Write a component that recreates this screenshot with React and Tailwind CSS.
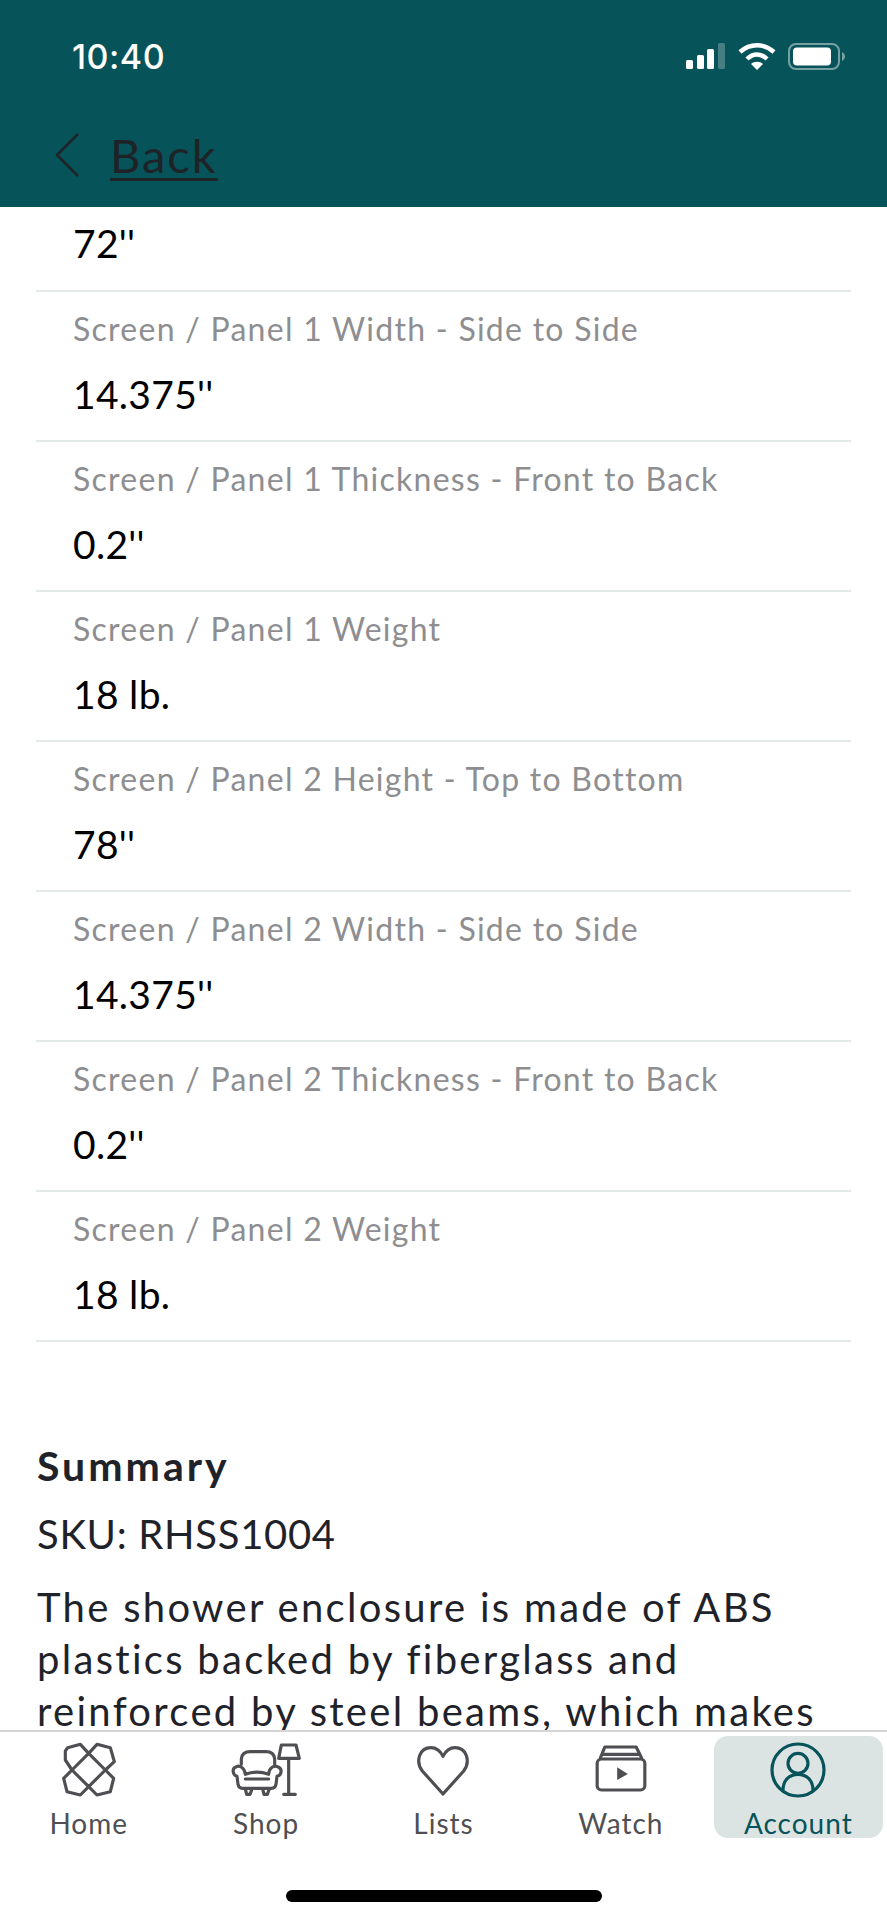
const F = "font-['Lato','Noto_Sans',sans-serif]";
const rows = [
  ["Screen / Panel 1 Width - Side to Side", "14.375''"],
  ["Screen / Panel 1 Thickness - Front to Back", "0.2''"],
  ["Screen / Panel 1 Weight", "18 lb."],
  ["Screen / Panel 2 Height - Top to Bottom", "78''"],
  ["Screen / Panel 2 Width - Side to Side", "14.375''"],
  ["Screen / Panel 2 Thickness - Front to Back", "0.2''"],
  ["Screen / Panel 2 Weight", "18 lb."],
];
const S = { width: 80, height: 70, viewBox: "0 0 240 210", fill: "none", stroke: "currentColor", strokeWidth: 9.5, strokeLinecap: "round", strokeLinejoin: "round" };
function HomeIcon() {
  return <svg {...S}>
    <g transform="translate(4 0)">
      <path d="M115 55 L90 28 L52 38 L45 48 V75 L65 105" />
      <path d="M115 55 L140 28 L180 38 L192 80 L165 105" />
      <path d="M165 105 L190 130 L180 170 L140 180 L115 155" />
      <path d="M115 155 L90 180 L50 170 L40 130 L65 105" />
      <path d="M115 55 L165 105 L115 155 L65 105 Z" />
    </g>
  </svg>;
}
function ShopIcon() {
  return <svg {...S}>
    <g transform="translate(-2 0)">
      <path d="M48 88 V72 Q50 50 75 50 H122 Q146 50 148 72 V88" />
      <path d="M60 118 C58 100 45 90 33 95 C18 100 22 120 35 124 L38 148 Q40 160 52 160 H138 Q150 160 152 148 L155 124 C170 120 172 100 157 95 C145 90 130 100 130 118 Q95 105 60 118 Z" />
      <path d="M60 132 H130 M60 162 L64 178 H74 L80 162 M112 162 L116 178 H126 L132 162" />
      <path d="M168 30 H212 L222 70 H160 Z M190 70 V178 M175 178 H210" />
    </g>
  </svg>;
}
function HeartIcon() {
  return <svg {...S}>
    <path d="M120 177 L58 108 C36 78 50 38 84 38 C100 38 112 48 120 64 C128 48 140 38 156 38 C190 38 204 78 182 108 Z" />
  </svg>;
}
function WatchIcon() {
  return <svg {...S}>
    <g transform="translate(13.5 0)">
      <rect x="35" y="72" width="143" height="93" rx="13" />
      <path d="M45 68 L58 36 H152 L168 68 M50 58 H162" />
      <path d="M95 97 L127 117 L95 135 Z" fill="currentColor" stroke="none" />
    </g>
  </svg>;
}
function AccountIcon() {
  return <svg {...S}>
    <g transform="translate(-10 0)">
      <circle cx="130" cy="105" r="78" />
      <circle cx="130" cy="85" r="30" />
      <path d="M85 166 C85 135 105 118 130 118 C155 118 175 135 175 166" />
    </g>
  </svg>;
}
function Tab({ icon, label, active }) {
  return <div className={`flex flex-col items-center h-[102px] ${active ? "bg-[#dce4e3] text-[#07535a] rounded-[14px] mx-1" : "text-[#4f4f53]"}`}>
    <div className="h-[68px] flex items-center justify-center">{icon}</div>
    <div className="text-[28px] leading-[38px] tracking-[1px]">{label}</div>
  </div>;
}
export default function App() {
  return <div className={`w-[887px] h-[1920px] bg-white flex flex-col overflow-hidden ${F}`}>
    <header className="h-[207px] shrink-0 bg-[#07535a] px-[55px]">
      <div className="flex items-center justify-between h-[113px] pl-[17px]">
        <span className="text-white text-[34px] font-medium tracking-[0.5px] font-['Inter',sans-serif]">10:40</span>
        <div className="flex items-center gap-[12px] mr-[-13px]">
          <svg width="40" height="27" viewBox="0 0 40 27" fill="white">
            <rect x="0" y="17" width="7" height="9" rx="1.5" />
            <rect x="11" y="12" width="7" height="14" rx="1.5" />
            <rect x="21" y="6" width="7" height="20" rx="1.5" />
            <rect x="32" y="0" width="7" height="26" rx="1.5" opacity="0.25" />
          </svg>
          <svg width="38" height="27" viewBox="0 0 38 27" fill="none" stroke="white" strokeWidth="4.5">
            <path d="M2 9 C12 0 26 0 36 9" />
            <path d="M9 16 C15 10 23 10 29 16" />
            <path d="M19 27 L13 21 C16 18 22 18 25 21 Z" fill="white" stroke="none" />
          </svg>
          <svg width="57" height="27" viewBox="0 0 57 27" fill="none">
            <rect x="1" y="1" width="50" height="25" rx="7" stroke="white" strokeOpacity="0.45" strokeWidth="2" />
            <rect x="5" y="4.5" width="38" height="18" rx="4" fill="white" />
            <path d="M54 9 C56 10 57 12 57 13.5 C57 15 56 17 54 18 Z" fill="white" fillOpacity="0.45" />
          </svg>
        </div>
      </div>
      <div className="flex items-center gap-[31px] text-[#1d2327] mt-[14px]">
        <svg width="24" height="44" viewBox="0 0 24 44" fill="none" stroke="currentColor" strokeWidth="2.6"><path d="M23 1 L2 22 L23 43" /></svg>
        <span className="text-[47px] leading-[56px] tracking-[2px] underline decoration-[3px] underline-offset-[5px]">Back</span>
      </div>
    </header>
    <main className="flex-1 min-h-0 overflow-hidden">
      <div className="mx-[36px] border-b-2 border-[#e3e9e8] h-[85px] pl-[37px] text-black text-[39px] tracking-[0.3px] leading-[72px]">72''</div>
      {rows.map((r, i) => (
        <div key={i} className="mx-[36px] border-b-2 border-[#e3e9e8] h-[150px] pl-[37px] pt-[17px]">
          <div className="text-[#8e8e91] text-[32px] tracking-[1.27px] leading-[40px]">{r[0]}</div>
          <div className="text-black text-[39px] tracking-[0.3px] leading-[48px] mt-[21px]">{r[1]}</div>
        </div>
      ))}
      <div className="px-[37px] pt-[99px] text-[#1f2329]">
        <div className="text-[41px] leading-[50px] font-bold tracking-[3px]">Summary</div>
        <div className="text-[40px] leading-[50px] tracking-[0.7px] mt-[18px]">SKU: RHSS1004</div>
        <p className="text-[40px] leading-[52px] tracking-[2.3px] mt-[22px] w-[800px]">The shower enclosure is made of ABS plastics backed by fiberglass and reinforced by steel beams, which makes</p>
      </div>
    </main>
    <nav className="h-[190px] shrink-0 border-t-2 border-[#d5d5d5] bg-white relative pt-[4px]">
      <div className="grid grid-cols-5">
        <Tab icon={<HomeIcon />} label="Home" />
        <Tab icon={<ShopIcon />} label="Shop" />
        <Tab icon={<HeartIcon />} label="Lists" />
        <Tab icon={<WatchIcon />} label="Watch" />
        <Tab icon={<AccountIcon />} label="Account" active />
      </div>
      <div className="absolute left-[286px] top-[158px] w-[316px] h-[12px] rounded-full bg-black" />
    </nav>
  </div>;
}
